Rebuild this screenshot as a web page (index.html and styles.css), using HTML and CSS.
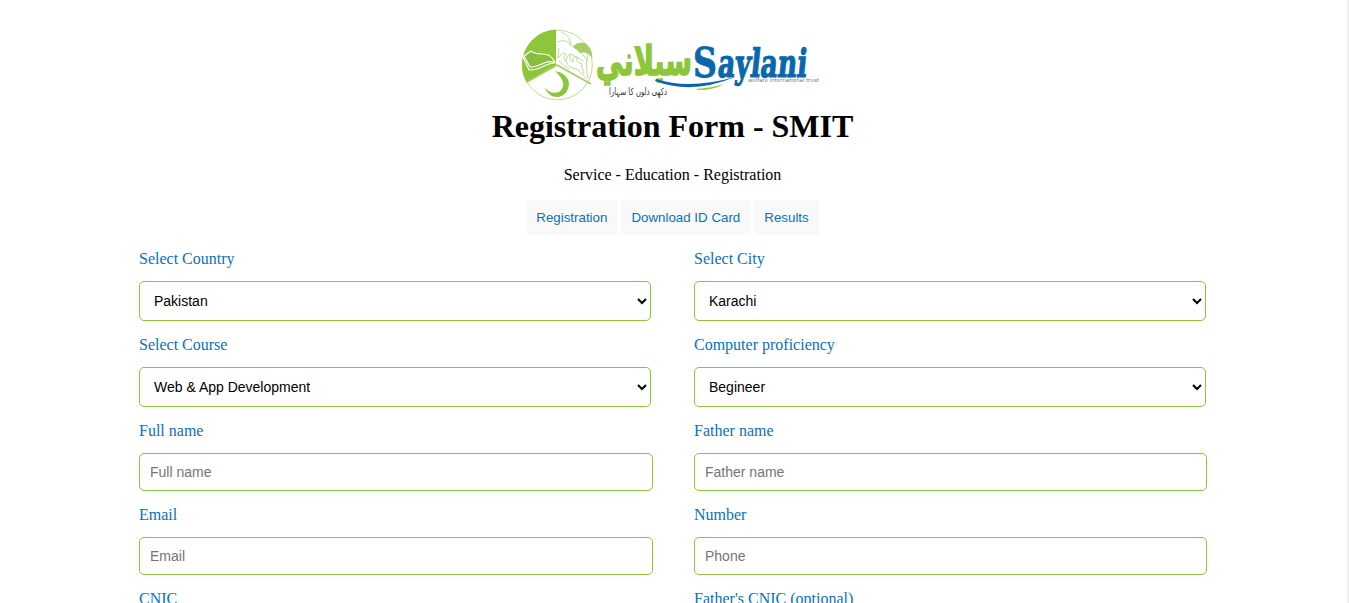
FILE: index.html
```html
<!DOCTYPE html>
<html lang="en">
<head>
<meta charset="utf-8">
<title>Registration Form - SMIT</title>
<link rel="stylesheet" href="styles.css">
</head>
<body>
<div class="page">
  <header class="header">
    <svg class="logo" viewBox="520 26 300 78" role="img" aria-label="Saylani Welfare International Trust">
      <circle cx="557.5" cy="65" r="34.8" fill="#fff" stroke="#bddd90" stroke-width="1"/>
      <path class="green" d="M556 65V29.500A35.500 35.500 0 0 0 526.500 82.500Z"/>
      <path d="M557 65L527 82M557 65L591 84" stroke="#a4cf65" stroke-width="1.8" fill="none"/>
      <path d="M524 56L531 51Q535 54 542 54Q549 54 552 58L555 62Q549 61 544 63Q536 67 530 67Z" fill="#86bf3a" stroke="#fff" stroke-width="1.2"/>
      <path d="M524 56L523.500 58L529 70Q537 70 544 66Q550 63 555 63" stroke="#fff" stroke-width="1.2" fill="none"/>
      <path d="M555 71Q567 73 569 83Q569 94 559 97Q549 98 544 87Q551 95 559 92Q569 84 555 71Z" fill="#8cc63b"/>
      <path d="M573 47Q578 41 586 44Q592 49 592 57Q585 50 580 53Q577 49 573 47Z" fill="#a4ce68" stroke="#7caf3c" stroke-width=".8" stroke-dasharray="1 1"/>
      <path d="M558 42Q566 38 573 46Q582 52 588 61M559 48L558 58Q563 51 566 54Q562 59 566 61Q567 54 571 54Q568 60 573 62Q572 55 577 57Q576 64 581 63L584 74M561 32Q572 36 570 46M566 61Q569 69 577 69L587 79M559 61Q564 66 569 69M571 54L583 61M588 55Q585 64 588 78" stroke="#add182" stroke-width=".8" fill="none"/>
      <text class="urdu" transform="translate(0 74.500) scale(1 1.120)" x="596" y="0" textLength="96" lengthAdjust="spacingAndGlyphs">سيلاني</text>
      <path class="blue" d="M656 79Q689 90 735 77Q692 95 655 81Z"/>
      <path class="green" d="M696 89Q712 88 724 84Q714 90 698 90Z"/>
      <text class="name-cap" x="693" y="76.500" textLength="24" lengthAdjust="spacingAndGlyphs">S</text>
      <text class="name" transform="translate(717 76.500) skewX(-6) scale(1 1.220)" x="0" y="0" textLength="89" lengthAdjust="spacingAndGlyphs">aylani</text>
      <text class="trust" x="748" y="81.500" textLength="71" lengthAdjust="spacingAndGlyphs">welfare international trust</text>
      <text class="tagline" x="609" y="95" textLength="58" lengthAdjust="spacingAndGlyphs">دکھی دلوں کا سہارا</text>
    </svg>
    <h1 class="title">Registration Form - SMIT</h1>
    <p class="subtitle">Service - Education - Registration</p>
    <nav class="tabs">
      <button class="tab">Registration</button>
      <button class="tab">Download ID Card</button>
      <button class="tab">Results</button>
    </nav>
  </header>
  <form class="form">
    <div class="field"><label>Select Country</label><select><option>Pakistan</option></select></div>
    <div class="field"><label>Select City</label><select><option>Karachi</option></select></div>
    <div class="field"><label>Select Course</label><select><option>Web &amp; App Development</option></select></div>
    <div class="field"><label>Computer proficiency</label><select><option>Begineer</option></select></div>
    <div class="field"><label>Full name</label><input placeholder="Full name"></div>
    <div class="field"><label>Father name</label><input placeholder="Father name"></div>
    <div class="field"><label>Email</label><input placeholder="Email"></div>
    <div class="field"><label>Number</label><input placeholder="Phone"></div>
    <div class="field"><label>CNIC</label><input placeholder="CNIC"></div>
    <div class="field"><label>Father's CNIC (optional)</label><input placeholder="Father's CNIC"></div>
  </form>
</div>
</body>
</html>
```
FILE: styles.css
```css
* { box-sizing: border-box; }
body {
  margin: 0;
  height: 603px;
  overflow: hidden;
  background: #fff;
  font-family: "Liberation Serif", "Times New Roman", serif;
  font-size: 16px;
}
.page { height: 603px; overflow: hidden; border-right: 2px solid #f0f0f0; }
.header {
  display: flex;
  flex-direction: column;
  align-items: center;
  padding: 26px 2px 0 0;
}
.logo { display: block; width: 300px; height: 78px; margin-right: 5px; overflow: visible; }
.green { fill: #8cc63b; }
.blue { fill: #0a67ae; }
.urdu { font: bold 37px "DejaVu Sans", sans-serif; fill: #8cc63b; stroke: #8cc63b; stroke-width: 1.4; }
.name-cap { font: bold 41px "DejaVu Serif", serif; fill: #0a67ae; stroke: #0a67ae; stroke-width: .8; }
.name { font: bold 32px "DejaVu Serif", serif; fill: #0a67ae; stroke: #0a67ae; stroke-width: 1; }
.trust { font: 5.5px "DejaVu Sans", sans-serif; fill: #6e8397; }
.tagline { font: 10px "DejaVu Sans", sans-serif; fill: #333; }
.title { margin: 4px 0 0; font-size: 32px; line-height: 37px; }
.subtitle { margin: 21px 0 0; line-height: 18px; }
.tabs { display: flex; gap: 4px; margin-top: 16px; }
.tab {
  height: 35px;
  padding: 0 10px;
  border: 0;
  background: #f9f9f9;
  color: #0d70b8;
  font: 13.333px "Liberation Sans", Arial, sans-serif;
}
.form {
  display: grid;
  grid-template-columns: 514px 513px;
  gap: 15px 41px;
  padding: 15px 0 0 139px;
}
.field { display: flex; flex-direction: column; gap: 13px; }
.field label { color: #0d70b8; line-height: 18px; }
.field select, .field input {
  border: 1px solid #8cc63b;
  border-radius: 5px;
  background: #fff;
  color: #000;
  font: 14px "Liberation Sans", Arial, sans-serif;
}
.field select { width: 512px; height: 40px; padding: 0 1px 0 10px; }
.field input { height: 38px; padding: 0 10px; }
.field input::placeholder { color: #757575; }
```
